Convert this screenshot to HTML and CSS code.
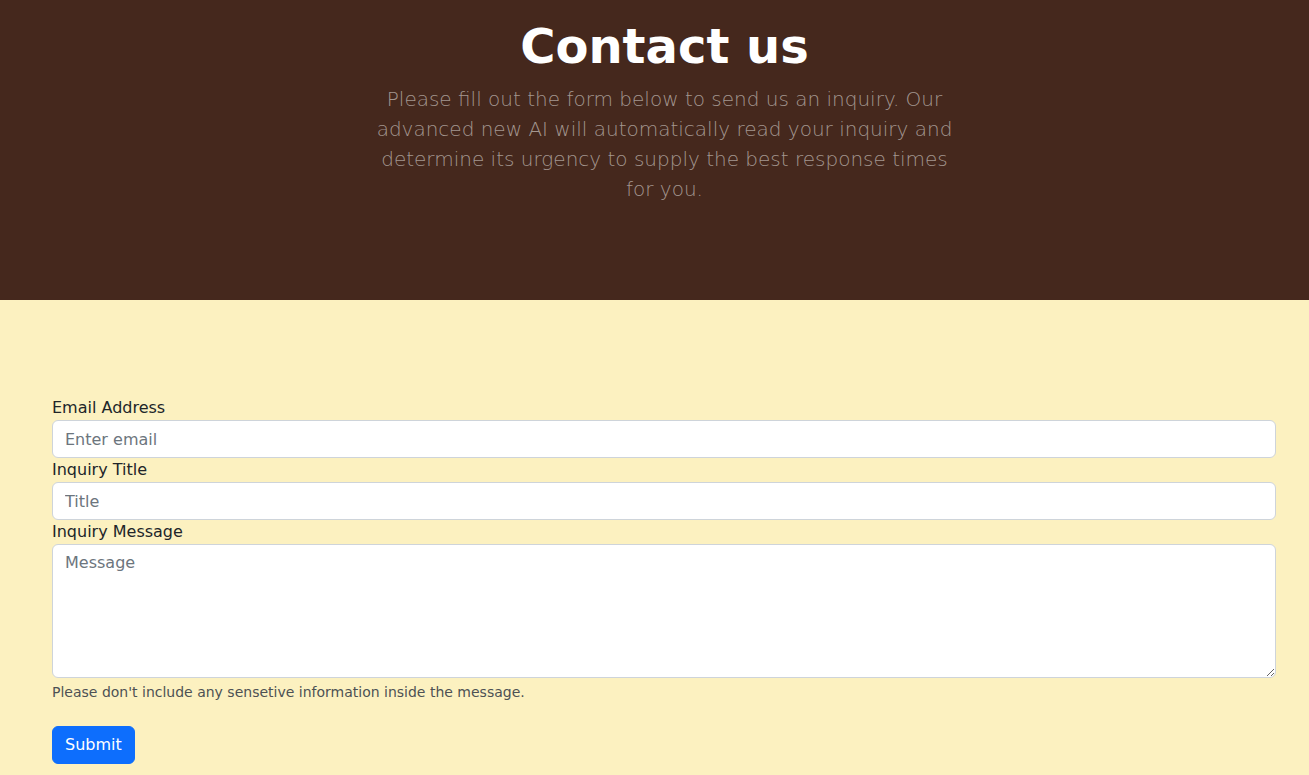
FILE: index.html
```html
<!DOCTYPE html>
<html lang="en">
<head>
<meta charset="utf-8">
<title>Contact us</title>
<link rel="stylesheet" href="styles.css">
</head>
<body>
<header class="hero">
  <h1 class="hero-title">Contact us</h1>
  <p class="hero-lead">Please fill out the form below to send us an inquiry. Our advanced new AI will automatically read your inquiry and determine its urgency to supply the best response times for you.</p>
</header>
<main class="content">
  <form class="contact-form">
    <div class="field">
      <label class="form-label" for="email">Email Address</label>
      <input class="form-control" id="email" type="email" placeholder="Enter email">
    </div>
    <div class="field">
      <label class="form-label" for="title">Inquiry Title</label>
      <input class="form-control" id="title" type="text" placeholder="Title">
    </div>
    <div class="field field-last">
      <label class="form-label" for="message">Inquiry Message</label>
      <textarea class="form-control form-textarea" id="message" placeholder="Message"></textarea>
      <div class="form-text">Please don't include any sensetive information inside the message.</div>
    </div>
    <button class="btn-submit" type="submit">Submit</button>
  </form>
</main>
</body>
</html>
```
FILE: styles.css
```css
* { box-sizing: border-box; }
html, body { margin: 0; padding: 0; }
body {
  font-family: "DejaVu Sans", sans-serif;
  font-size: 16px;
  line-height: 1.5;
  color: #212529;
  background: #fcf1c0;
}
.hero {
  background: #45281d;
  height: 300px;
  text-align: center;
  padding: 18px 0 0 20px;
}
.hero-title {
  margin: 0 0 8px;
  font-size: 48px;
  line-height: 1.2;
  font-weight: 700;
  color: #ffffff;
}
.hero-lead {
  margin: 0 auto;
  width: 590px;
  font-size: 20px;
  line-height: 30px;
  font-weight: 300;
  color: #a3968f;
}
.content {
  padding: 96px 33px 40px 52px;
}
.contact-form {
  display: flex;
  flex-direction: column;
}
.field { display: flex; flex-direction: column; }
.field-last { margin-bottom: 23px; }
.form-label {
  font-size: 16px;
  line-height: 24px;
}
.form-control {
  display: block;
  width: 100%;
  height: 38px;
  padding: 6px 12px;
  font-family: inherit;
  font-size: 16px;
  line-height: 24px;
  color: #212529;
  background: #ffffff;
  border: 1px solid #ced4da;
  border-radius: 6px;
}
.form-control::placeholder { color: #6c757d; }
.form-textarea {
  height: 134px;
  resize: vertical;
}
.form-text {
  margin-top: 4px;
  font-size: 14px;
  line-height: 21px;
  color: #4d5154;
}
.btn-submit {
  align-self: flex-start;
  height: 38px;
  padding: 6px 12px;
  font-family: inherit;
  font-size: 16px;
  line-height: 24px;
  color: #ffffff;
  background: #0d6efd;
  border: 1px solid #0d6efd;
  border-radius: 6px;
}
```
